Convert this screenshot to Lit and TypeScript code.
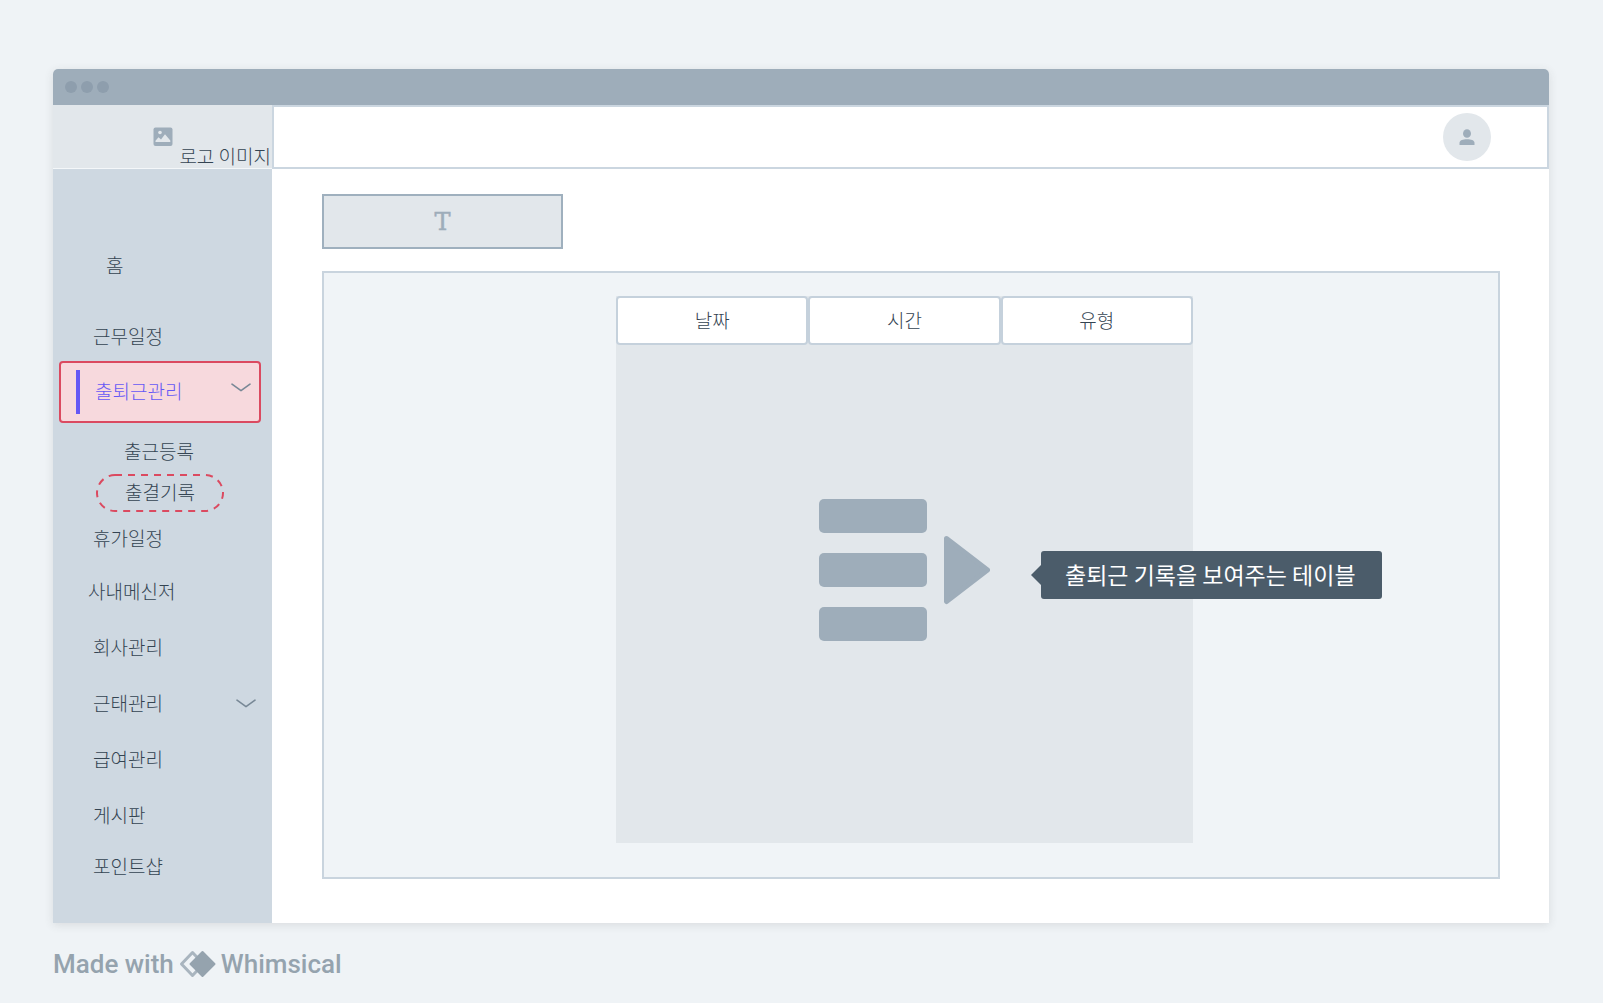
import { LitElement, html, css, svg, nothing } from "lit";
import { customElement } from "lit/decorators.js";
import { classMap } from "lit/directives/class-map.js";

interface NavItem {
  label: string;
  kind: string;
  expandable?: boolean;
  active?: boolean;
}

const NAV: NavItem[] = [
  { label: "홈", kind: "home" },
  { label: "근무일정", kind: "short" },
  { label: "출퇴근관리", kind: "active", expandable: true, active: true },
  { label: "출근등록", kind: "sub" },
  { label: "출결기록", kind: "pill" },
  { label: "휴가일정", kind: "short" },
  { label: "사내메신저", kind: "wide" },
  { label: "회사관리", kind: "row" },
  { label: "근태관리", kind: "row", expandable: true },
  { label: "급여관리", kind: "row" },
  { label: "게시판", kind: "row" },
  { label: "포인트샵", kind: "last" },
];

const chevron = html`<svg class="chevron" width="20" height="9" viewBox="0 0 20 9" aria-hidden="true">
  ${svg`<path d="M1 1.2 10 7.6 19 1.2" fill="none" stroke="#788896" stroke-width="1.6" stroke-linecap="round" stroke-linejoin="round"/>`}
</svg>`;

@customElement("app-root")
export class AppRoot extends LitElement {
  static styles = css`
    :host {
      display: block;
      min-height: 100vh;
      box-sizing: border-box;
      padding: 69px 54px 24px 53px;
      background: #eff3f6;
      color: #344452;
      font-family: "Noto Sans CJK KR", sans-serif;
      font-size: 19px;
      font-weight: 300;
      line-height: 24px;
    }
    *, *::before, *::after { box-sizing: border-box; }
    svg { display: block; }
    .window {
      border-radius: 5px 5px 0 0;
      background: #fff;
      box-shadow: 0 2px 10px rgba(60, 60, 60, 0.12);
    }
    .titlebar {
      display: flex;
      align-items: center;
      gap: 4px;
      height: 36px;
      padding-left: 12px;
      border-radius: 5px 5px 0 0;
      background: #9eadba;
    }
    .dot { width: 12px; height: 12px; border-radius: 50%; background: #8e9ead; }
    .layout {
      display: grid;
      grid-template-columns: 219px minmax(0, 1fr);
      grid-template-rows: 64px auto;
    }
    .logo {
      display: flex;
      justify-content: flex-end;
      gap: 6px;
      padding: 22px 1px 0 0;
      background: #e2e7eb;
      border-bottom: 1px solid #f4f7f9;
    }
    .logo-text { padding-top: 17px; white-space: nowrap; }
    .topbar {
      display: flex;
      align-items: center;
      justify-content: flex-end;
      padding-right: 56px;
      border: 2px solid #cbd6e0;
    }
    .avatar {
      display: grid;
      place-items: center;
      width: 48px;
      height: 48px;
      padding: 0;
      border: 0;
      border-radius: 50%;
      background: #e2e7eb;
    }
    .sidebar { background: #ced8e1; }
    .nav { margin: 0; padding: 68px 11px 34px 6px; list-style: none; }
    .link {
      display: flex;
      align-items: center;
      justify-content: space-between;
      height: 56px;
      padding: 0 5px 0 34px;
      color: inherit;
      text-decoration: none;
      white-space: nowrap;
    }
    .link.home { padding-left: 47px; margin-bottom: 18px; }
    .link.short { height: 50px; }
    .link.last { height: 46px; }
    .link.wide { padding-left: 29px; }
    .link.sub { height: 51px; padding: 4px 0 0 65px; }
    .link.active {
      height: 62px;
      padding: 0 8px 2px 15px;
      border: 2px solid #db4a60;
      border-radius: 4px;
      background: #f7d9dd;
      color: #6558f5;
      justify-content: flex-start;
      gap: 15px;
    }
    .active .chevron { margin-left: auto; margin-bottom: 8px; }
    .marker { width: 4px; height: 44px; margin-top: 2px; background: #6558f5; }
    .link.pill {
      position: relative;
      width: 128px;
      height: 38px;
      margin: 0 0 1px 37px;
      padding: 0 0 2px;
      justify-content: center;
    }
    .pill-outline { position: absolute; inset: 0; }
    .main {
      display: flex;
      flex-direction: column;
      gap: 22px;
      padding: 25px 49px 44px 50px;
    }
    .heading {
      display: grid;
      place-items: center;
      width: 241px;
      height: 55px;
      margin: 0;
      border: 2px solid #9fb0be;
      background: #e2e7eb;
      color: #9eadba;
      font: 400 24px/28px "DejaVu Serif", serif;
      -webkit-text-stroke: 0.5px #9eadba;
    }
    .panel {
      display: flex;
      justify-content: center;
      padding: 23px 13px 34px 0;
      border: 2px solid #c9d4de;
      background: #f0f4f7;
    }
    .board { position: relative; width: 577px; }
    .table {
      width: 100%;
      border-collapse: separate;
      border-spacing: 0;
      table-layout: fixed;
      background: #e2e7eb;
    }
    .th {
      height: 49px;
      padding: 0 0 2px;
      border: 2px solid #c5d1dc;
      border-radius: 4px;
      background: #fff;
      font-weight: 300;
      text-align: center;
    }
    .td { height: 498px; padding: 0; }
    .glyph { margin: 0 auto 48px 202px; }
    .tip {
      position: absolute;
      left: 425px;
      top: 255px;
      display: flex;
      align-items: center;
      height: 48px;
      padding: 0 26px 2px 24px;
      border-radius: 3px;
      background: #4b5c6a;
      color: #fff;
      font-size: 23px;
      font-weight: 400;
      white-space: nowrap;
    }
    .tip::before {
      content: "";
      position: absolute;
      right: 100%;
      top: 14px;
      border: 10px solid transparent;
      border-left-width: 0;
      border-right-color: #4b5c6a;
    }
    .credit {
      display: flex;
      align-items: center;
      gap: 5px;
      margin-top: 26px;
      color: #95a3ae;
      font: 500 26px/30px Roboto, sans-serif;
      text-decoration: none;
    }
  `;

  private renderItem(item: NavItem) {
    return html`<li>
      <a href="#" class=${classMap({ link: true, [item.kind]: true })} aria-current=${item.active ? "page" : nothing}>
        ${item.active ? html`<span class="marker"></span>` : nothing}
        ${item.kind === "pill"
          ? html`<svg class="pill-outline" width="128" height="38" viewBox="0 0 128 38" aria-hidden="true">
              <rect x="1" y="1" width="126" height="36" rx="18" fill="none" stroke="#db4a60" stroke-width="2" stroke-dasharray="7 6" />
            </svg>`
          : nothing}
        <span>${item.label}</span>
        ${item.expandable ? chevron : nothing}
      </a>
    </li>`;
  }

  render() {
    return html`
      <div class="window">
        <div class="titlebar"><i class="dot"></i><i class="dot"></i><i class="dot"></i></div>
        <div class="layout">
          <div class="logo">
            <svg width="20" height="20" viewBox="0 0 20 20" aria-hidden="true">
              <rect x="0.5" y="0.5" width="19" height="18.5" rx="2" fill="#9eadba" />
              <circle cx="7" cy="5.5" r="1.8" fill="#e2e7eb" />
              <path d="M2.5 15v-1.200L5.500 10.200 8 12.500 12 7.200 17.300 13.600V15z" fill="#e2e7eb" />
            </svg>
            <span class="logo-text">로고 이미지</span>
          </div>
          <header class="topbar">
            <button class="avatar" type="button" aria-label="프로필">
              <svg width="16" height="16" viewBox="0 0 16 16" aria-hidden="true">
                <ellipse cx="8" cy="4.500" rx="4" ry="4.300" fill="#9eadba" />
                <path d="M0.500 16v-2.200C0.500 11.300 4 10.200 8 10.200s7.500 1.100 7.500 3.600V16z" fill="#9eadba" />
              </svg>
            </button>
          </header>
          <nav class="sidebar"><ul class="nav">${NAV.map((item) => this.renderItem(item))}</ul></nav>
          <main class="main">
            <h1 class="heading">T</h1>
            <section class="panel">
              <div class="board">
                <table class="table">
                  <thead>
                    <tr>${["날짜", "시간", "유형"].map((t) => html`<th class="th" scope="col">${t}</th>`)}</tr>
                  </thead>
                  <tbody>
                    <tr>
                      <td class="td" colspan="3">
                        <svg class="glyph" width="172" height="144" viewBox="0 0 172 144" aria-hidden="true">
                          <g fill="#9eadba">
                            <rect x="1" y="1" width="108" height="34" rx="5" />
                            <rect x="1" y="55" width="108" height="34" rx="5" />
                            <rect x="1" y="109" width="108" height="34" rx="5" />
                            <path d="M128.500 40.500 169.500 72 128.500 103.500z" stroke="#9eadba" stroke-width="5" stroke-linejoin="round" />
                          </g>
                        </svg>
                      </td>
                    </tr>
                  </tbody>
                </table>
                <div class="tip" role="note">출퇴근 기록을 보여주는 테이블</div>
              </div>
            </section>
          </main>
        </div>
      </div>
      <a class="credit" href="#">
        <span>Made with</span>
        <svg width="37" height="28" viewBox="0 0 37 28" aria-hidden="true">
          <path d="M13.500 2.500 2.500 14 13.500 25.500 24.500 14z" fill="none" stroke="#a9b5bf" stroke-width="3" stroke-linejoin="round" />
          <path d="M23.500 2 11.500 14 23.500 26 35.500 14z" fill="#95a3ae" stroke="#95a3ae" stroke-width="2" stroke-linejoin="round" />
        </svg>
        <span>Whimsical</span>
      </a>
    `;
  }
}
